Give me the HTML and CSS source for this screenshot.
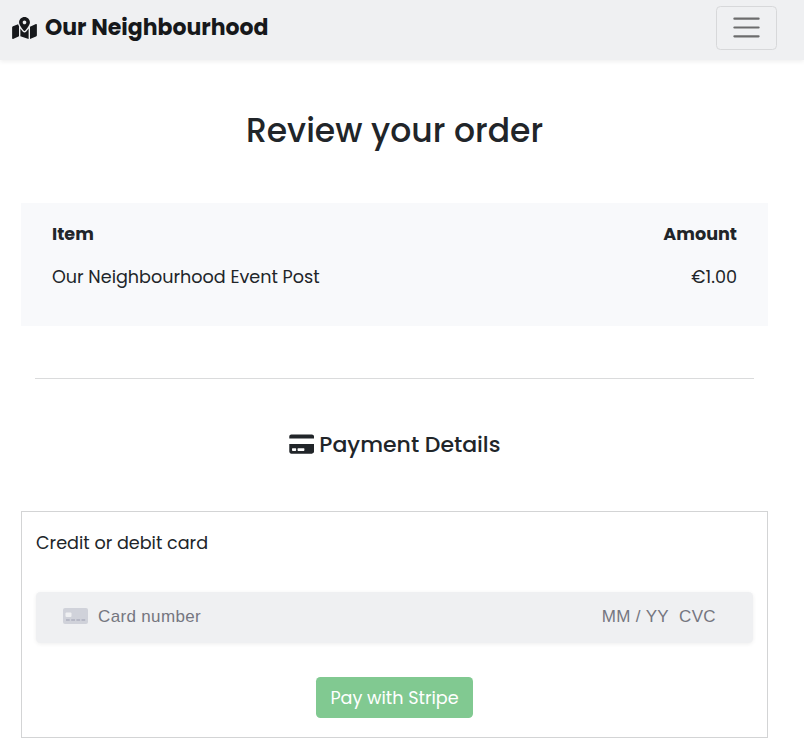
FILE: index.html
```html
<!DOCTYPE html>
<html lang="en">
<head>
<meta charset="utf-8">
<title>Our Neighbourhood</title>
<link rel="stylesheet" href="styles.css">
</head>
<body>
<header class="navbar">
  <a class="brand">
    <svg class="brand-icon" viewBox="0 0 576 512"><path d="M288 0c-69.59 0-126 56.41-126 126 0 56.26 82.35 158.8 113.9 196.02 6.39 7.54 17.82 7.54 24.2 0C331.65 284.8 414 182.26 414 126 414 56.41 357.59 0 288 0zm0 168c-23.2 0-42-18.8-42-42s18.8-42 42-42 42 18.8 42 42-18.8 42-42 42zM20.12 215.95A32.006 32.006 0 0 0 0 245.66v250.32c0 11.32 11.43 19.06 21.94 14.86L160 448V214.92c-8.84-15.98-16.07-31.54-21.25-46.42L20.12 215.95zM288 359.67c-14.07 0-27.38-6.18-36.51-16.96-19.66-23.2-40.57-49.62-59.49-76.72v182l192 64V266c-18.92 27.09-39.82 53.52-59.49 76.72-9.13 10.77-22.44 16.95-36.51 16.95zm266.06-198.51L416 224v288l139.88-55.95A31.996 31.996 0 0 0 576 426.34V176.02c0-11.32-11.43-19.06-21.94-14.86z"/></svg>
    <span class="brand-name">Our Neighbourhood</span>
  </a>
  <button class="toggler" aria-label="Menu">
    <svg viewBox="0 0 30 30"><path d="M4 7h22M4 15h22M4 23h22"/></svg>
  </button>
</header>
<main class="page">
  <h1 class="title"><span>Review your order</span></h1>
  <section class="order">
    <div class="row head"><span class="item-head">Item</span><span class="amount-head">Amount</span></div>
    <div class="row"><span class="item">Our Neighbourhood Event Post</span><span class="amount">€1.00</span></div>
  </section>
  <hr class="rule">
  <h2 class="subtitle">
    <svg class="card-icon" viewBox="0 0 576 512"><path d="M0 432c0 26.5 21.5 48 48 48h480c26.5 0 48-21.5 48-48V256H0v176zm192-68c0-6.6 5.4-12 12-12h136c6.6 0 12 5.4 12 12v40c0 6.6-5.4 12-12 12H204c-6.6 0-12-5.4-12-12v-40zm-128 0c0-6.6 5.4-12 12-12h72c6.6 0 12 5.4 12 12v40c0 6.6-5.4 12-12 12H76c-6.6 0-12-5.4-12-12v-40zM576 80v48H0V80c0-26.5 21.5-48 48-48h480c26.5 0 48 21.5 48 48z"/></svg>
    <span>Payment Details</span>
  </h2>
  <form class="payment">
    <label class="label">Credit or debit card</label>
    <div class="field">
      <svg class="field-icon" viewBox="0 0 25 16"><rect width="25" height="16" rx="2" fill="#d0d2da"/><rect x="2.500" y="4.500" width="6" height="4.500" rx="1" fill="#eff0f2"/><path d="M3 12h3.700M8.200 12h3.800M13.400 12h3.700M18.500 12h3.700" stroke="#b6b8c5" stroke-width="1.800"/></svg>
      <span class="number">Card number</span>
      <span class="expiry">MM / YY</span>
      <span class="cvc">CVC</span>
    </div>
    <button class="pay" type="button"><span>Pay with Stripe</span></button>
  </form>
</main>
</body>
</html>
```
FILE: styles.css
```css
* { box-sizing: border-box; }
body {
  margin: 0;
  background: #fff;
  color: #212529;
  font-family: Poppins, Inter, sans-serif;
  font-size: 17.6px;
  line-height: 27px;
}
.navbar {
  display: flex;
  justify-content: space-between;
  align-items: flex-start;
  height: 60px;
  padding: 6px 27px 0 12px;
  background: #eff0f2;
  box-shadow: 0 2px 4px rgba(0, 0, 0, .06);
}
.brand { display: flex; color: #16181b; }
.brand-icon { width: 25px; height: 22px; margin: 11px 8px 0 0; fill: #16181b; }
.brand-name { font-size: 22px; font-weight: 700; line-height: 44px; white-space: nowrap; }
.toggler {
  width: 61px;
  height: 44px;
  padding: 0 0 1px;
  display: flex;
  justify-content: center;
  align-items: center;
  background: transparent;
  border: 1px solid #d7d8da;
  border-radius: 4.4px;
}
.toggler svg { width: 33px; height: 33px; }
.toggler path { fill: none; stroke: rgba(0, 0, 0, .55); stroke-width: 2; stroke-linecap: round; }
.page { width: 747px; margin-left: 21px; }
.title {
  margin: 0;
  padding-top: 50px;
  text-align: center;
  font-size: 33px;
  font-weight: 500;
  line-height: 42px;
}
.order { height: 123px; margin-top: 51px; padding: 18px 31px 0; background: #f8f9fb; }
.row { display: flex; justify-content: space-between; white-space: nowrap; }
.head { margin-bottom: 16px; font-weight: 700; }
.rule { width: 719px; height: 1px; margin: 52px 14px 0; border: 0; background: #dadbdc; }
.subtitle {
  display: flex;
  justify-content: center;
  margin: 52px 0 0;
  font-size: 22px;
  font-weight: 500;
  line-height: 28px;
}
.card-icon { width: 25.3px; height: 22px; margin: 1.6px 5.5px 0 0; fill: #212529; }
.payment {
  display: flex;
  flex-direction: column;
  height: 227px;
  margin-top: 52px;
  padding: 18px 14px 0;
  border: 1px solid #d3d4d5;
}
.label { line-height: 27px; align-self: flex-start; }
.field {
  display: flex;
  align-items: center;
  width: 717px;
  height: 51px;
  margin-top: 35px;
  padding: 0 37px 2px 27px;
  border-radius: 4.4px;
  background: #eff0f2;
  box-shadow: 0 1px 4px rgba(0, 0, 0, .07);
  color: #757680;
  font-family: "Liberation Sans", sans-serif;
  font-size: 17px;
  letter-spacing: .35px;
}
.field-icon { width: 25px; height: 16px; margin: 0 10px 1px 0; }
.expiry { margin-left: auto; margin-right: 10px; }
.pay {
  align-self: center;
  width: 157px;
  height: 41px;
  margin-top: 34px;
  padding: 1px 0 0;
  border: 0;
  border-radius: 4.4px;
  background: #81c991;
  color: #fff;
  font: inherit;
}
```
